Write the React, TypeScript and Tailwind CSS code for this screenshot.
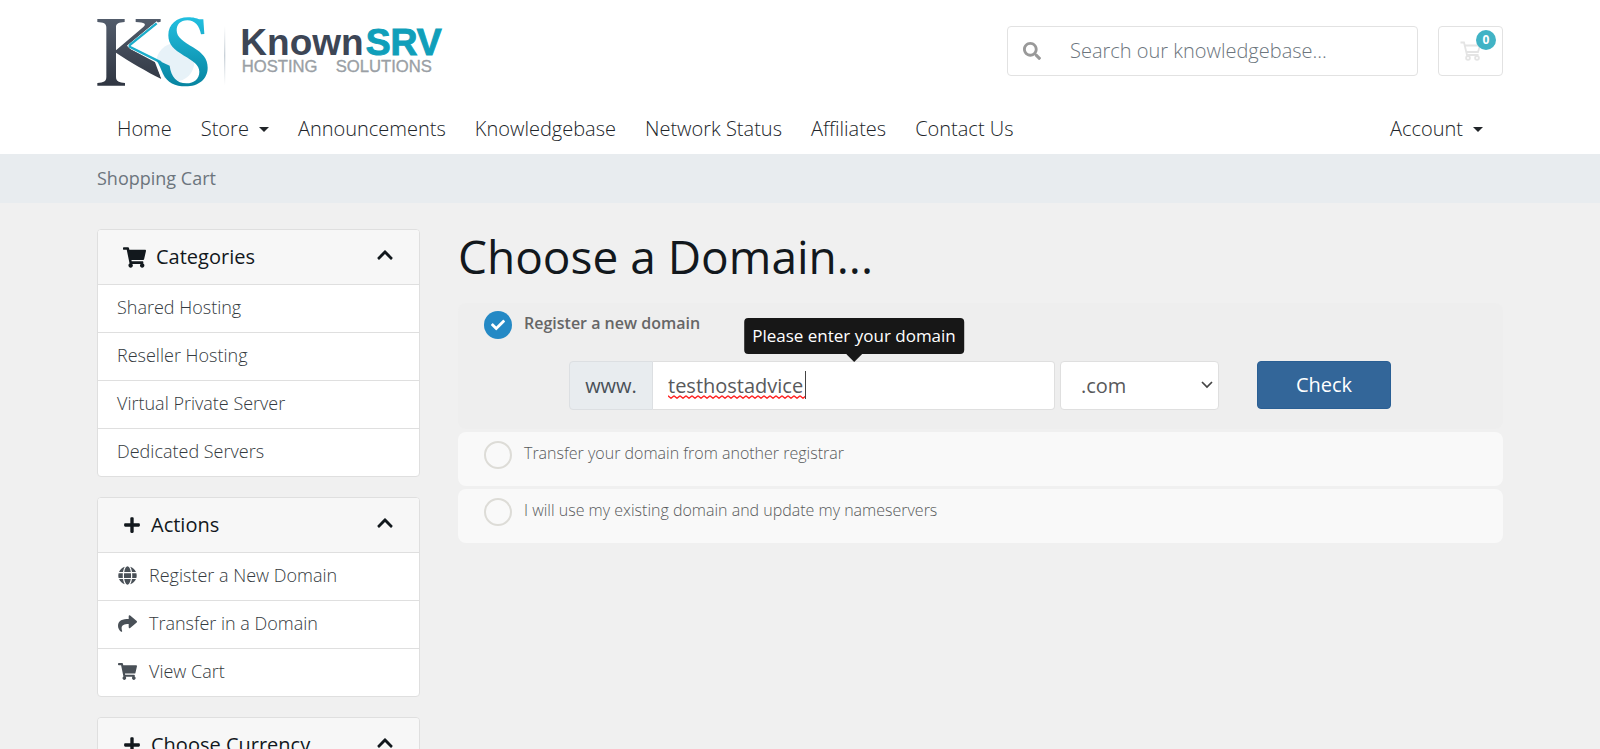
import React from 'react';
import { FaCheck, FaChevronUp, FaGlobe, FaPlus, FaSearch, FaShare, FaShoppingCart } from 'react-icons/fa';

const navItems = [
  { label: 'Home' },
  { label: 'Store', dropdown: true },
  { label: 'Announcements' },
  { label: 'Knowledgebase' },
  { label: 'Network Status' },
  { label: 'Affiliates' },
  { label: 'Contact Us' },
];

const categories = ['Shared Hosting', 'Reseller Hosting', 'Virtual Private Server', 'Dedicated Servers'];

const actions = [
  { label: 'Register a New Domain', icon: FaGlobe },
  { label: 'Transfer in a Domain', icon: FaShare },
  { label: 'View Cart', icon: FaShoppingCart },
];

const Caret = () => (
  <svg viewBox="0 0 10 5" className="ml-2.5 h-[5px] w-2.5 fill-current" aria-hidden="true">
    <path d="M0 0h10L5 5z" />
  </svg>
);

const Logo = () => (
  <svg viewBox="50 42 1041 219" className="h-[73px] w-[347px]" role="img" aria-label="KnownSRV Hosting Solutions">
    <defs>
      <linearGradient id="dark" x1="0" y1="0" x2="0" y2="1">
        <stop offset="0" stopColor="#525c6b" />
        <stop offset="1" stopColor="#303642" />
      </linearGradient>
      <linearGradient id="teal" x1="0" y1="0" x2="0" y2="1">
        <stop offset="0" stopColor="#22bfe0" />
        <stop offset="1" stopColor="#0784a0" />
      </linearGradient>
      <linearGradient id="rule" x1="0" y1="0" x2="0" y2="1">
        <stop offset="0" stopColor="#fff" />
        <stop offset="0.5" stopColor="#c9d1d8" />
        <stop offset="1" stopColor="#fff" />
      </linearGradient>
    </defs>
    <circle cx="285" cy="184" r="57" fill="#e7f2f8" />
    <path
      fill="url(#dark)"
      d="M51 54H133V63C116 64 107 67 107 78V148L189 78C199 69 194 64 166 63V54H241V62C229 64 221 68 211 76L140 134L149 143L229 186L243 234C200 213 145 180 107 155V228C107 241 117 245 134 246V254H51V246C70 245 78 241 78 228V80C78 67 69 64 51 63Z"
    />
    <path fill="none" stroke="#fff" strokeWidth="9" d="M232 64L148 134L155 141L226 176L236 203L250 238" />
    <path fill="none" stroke="#1badca" strokeWidth="7" d="M229 67L150 131Q145 135 151 139L242 184" />
    <path
      fill="url(#teal)"
      d="M369 55L372 99L362 100C357 74 344 58 321 58C300 58 289 71 289 88C289 110 310 122 338 139C367 156 382 174 382 200C382 235 354 256 316 256C284 256 261 245 248 218C242 206 238 191 226 175L268 194C272 227 290 247 318 247C342 247 357 233 357 212C357 191 337 179 311 164C281 146 264 131 264 103C264 70 289 49 323 49C340 49 349 52 357 55Z"
    />
    <rect x="431" y="75" width="4" height="178" fill="url(#rule)" />
    <g fontFamily="'Liberation Sans', Arial, sans-serif">
      <text x="480" y="162" fontSize="111" fontWeight="700" fill="#3d4656">Known</text>
      <text x="856" y="162" fontSize="112" fontWeight="700" fill="#109fba" stroke="#109fba" strokeWidth="3">SRV</text>
      <text x="484" y="212" fontSize="50" fill="#9a9fa5" stroke="#9a9fa5">HOSTING</text>
      <text x="766" y="212" fontSize="50" fill="#9a9fa5" stroke="#9a9fa5">SOLUTIONS</text>
    </g>
  </svg>
);

const SidebarCard = ({ title, icon, children }: { title: string; icon: React.ReactNode; children?: React.ReactNode }) => (
  <section className="overflow-hidden rounded border border-[#dfdfdf] bg-white">
    <h3 className="flex h-[55px] items-center border-b border-[#dfdfdf] bg-[#f7f7f7] px-[25px] text-xl font-normal text-[#12181d]">
      {icon}
      <span className="flex-1">{title}</span>
      <button type="button" aria-label={`Collapse ${title}`} className="pb-1">
        <FaChevronUp className="size-[18px]" />
      </button>
    </h3>
    {children}
  </section>
);

const App = () => {
  return (
    <div className="min-h-screen bg-[#f0f0f0] font-['Open_Sans',sans-serif] font-light text-[#212529]">
      <header className="bg-white">
        <div className="mx-auto max-w-[1406px]">
          <div className="flex h-[102px] items-center justify-between">
            <a href="#">
              <Logo />
            </a>
            <div className="flex items-center gap-5">
              <form className="flex h-[50px] w-[411px] items-center rounded border border-[#e2e2e2]">
                <button type="button" aria-label="Search" className="px-[15px] text-[#999]">
                  <FaSearch className="size-[18px]" />
                </button>
                <input
                  type="text"
                  aria-label="Search our knowledgebase"
                  placeholder="Search our knowledgebase..."
                  className="min-w-0 flex-1 px-3.5 text-xl outline-none placeholder:text-[#6c757d]"
                />
              </form>
              <a
                href="#"
                aria-label="Shopping Cart"
                className="relative flex h-[50px] w-[65px] items-center justify-center rounded border border-[#e2e2e2] text-[#e4e4e4]"
              >
                <svg viewBox="0 0 22 20" className="h-5 w-[22px]" fill="none" stroke="currentColor" strokeWidth="1.8">
                  <path d="M0.5 1.5H4L7 14H18.5M4.8 4.5H20L18 11H6.4" />
                  <circle cx="8" cy="17" r="1.9" />
                  <circle cx="17" cy="17" r="1.9" />
                </svg>
                <span className="absolute top-[3px] right-1.5 flex size-5 items-center justify-center rounded-full bg-[#41b3c5] text-xs font-bold text-white">
                  0
                </span>
              </a>
            </div>
          </div>
          <nav className="flex h-[52px] items-start justify-between px-5 pt-3 text-xl leading-[30px]">
            <ul className="flex gap-[29px]">
              {navItems.map((item) => (
                <li key={item.label}>
                  <a href="#" className="flex items-center">
                    {item.label}
                    {item.dropdown && <Caret />}
                  </a>
                </li>
              ))}
            </ul>
            <a href="#" className="flex items-center">
              Account
              <Caret />
            </a>
          </nav>
        </div>
      </header>

      <div className="bg-[#e8ecef]">
        <div className="mx-auto flex h-[49px] max-w-[1406px] items-center pb-0.5 text-lg font-normal text-[#6c757d]">
          Shopping Cart
        </div>
      </div>

      <div className="mx-auto flex max-w-[1406px] items-start gap-[38px] pt-[26px]">
        <aside className="flex w-[323px] shrink-0 flex-col gap-5">
          <SidebarCard title="Categories" icon={<FaShoppingCart className="mr-2.5 size-[23px]" />}>
            <ul className="divide-y divide-[#dfdfdf] text-lg text-[#343a40]">
              {categories.map((label) => (
                <li key={label}>
                  <a href="#" className="flex h-[47px] items-center px-[19px] pb-[3px]">{label}</a>
                </li>
              ))}
            </ul>
          </SidebarCard>
          <SidebarCard title="Actions" icon={<FaPlus className="mr-2.5 size-[18px]" />}>
            <ul className="divide-y divide-[#dfdfdf] text-lg text-[#343a40]">
              {actions.map(({ label, icon: Icon }) => (
                <li key={label}>
                  <a href="#" className="flex h-[47px] items-center gap-3 px-5 pb-[3px]">
                    <Icon className="size-[19px] text-[#495057]" />
                    {label}
                  </a>
                </li>
              ))}
            </ul>
          </SidebarCard>
          <SidebarCard title="Choose Currency" icon={<FaPlus className="mr-2.5 size-[18px]" />} />
        </aside>

        <main className="min-w-0 flex-1">
          <h1 className="mb-5 text-[46px] leading-[54px] font-normal text-[#12181d]">Choose a Domain...</h1>
          <form className="flex flex-col gap-[3px] text-[#58595b]">
            <div className="h-[126px] rounded-lg bg-[#eee] px-[26px] pt-2">
              <label className="flex items-start gap-3 text-base leading-6 font-semibold text-[#666]">
                <span className="relative size-7">
                  <input type="radio" name="domain" defaultChecked className="block size-7 appearance-none rounded-full bg-[#2489c5]" />
                  <FaCheck className="absolute top-[7px] left-[7px] size-3.5 text-white" />
                </span>
                Register a new domain
              </label>
              <div className="mt-[22px] ml-[85px] flex text-xl">
                <label
                  htmlFor="sld"
                  className="flex w-[84px] items-center justify-center rounded-l border border-[#dcdfe2] bg-[#e8ecef] font-normal text-[#495057]"
                >
                  www.
                </label>
                <div className="relative h-[49px] w-[402px]">
                  <input
                    id="sld"
                    type="text"
                    defaultValue="testhostadvice"
                    spellCheck={false}
                    className="size-full rounded-r border border-l-0 border-[#dfdfdf] bg-white px-[15px] font-normal outline-none"
                  />
                  <svg className="absolute top-[34px] left-[15px] h-1 w-[137px]" aria-hidden="true">
                    <defs>
                      <pattern id="wave" width="6" height="4" patternUnits="userSpaceOnUse">
                        <path d="M0 0.8L3 3.2L6 0.8" fill="none" stroke="#f22" strokeWidth="1.4" />
                      </pattern>
                    </defs>
                    <rect width="137" height="4" fill="url(#wave)" />
                  </svg>
                  <span className="absolute top-2.5 left-[152px] h-7 w-px bg-[#444]" />
                  <div
                    role="tooltip"
                    className="absolute bottom-[56px] left-1/2 flex h-9 -translate-x-1/2 items-center rounded bg-[#171717] px-2 text-[17px] font-normal whitespace-nowrap text-white"
                  >
                    Please enter your domain
                    <svg viewBox="0 0 16 8" className="absolute top-full left-1/2 h-2 w-4 -translate-x-1/2 fill-[#171717]">
                      <path d="M0 0h16L8 8z" />
                    </svg>
                  </div>
                </div>
                <div className="relative ml-[5px] h-[49px] w-[159px]">
                  <select
                    aria-label="Domain extension"
                    className="size-full appearance-none rounded border border-[#dfdfdf] bg-white px-5 font-normal"
                  >
                    <option>.com</option>
                  </select>
                  <svg viewBox="0 0 12 8" className="pointer-events-none absolute top-5 right-1.5 h-2 w-3" fill="none" stroke="#444" strokeWidth="1.7">
                    <path d="M1 1L6 6L11 1" />
                  </svg>
                </div>
                <button type="button" className="ml-[38px] h-12 w-[134px] rounded border border-[#2a5f94] bg-[#336699] font-normal text-white">
                  Check
                </button>
              </div>
            </div>
            <label className="flex h-[54px] items-start gap-3 rounded-lg bg-[#f9f9f9] px-[26px] pt-[9px] text-base leading-6">
              <input type="radio" name="domain" className="size-7 appearance-none rounded-full border-2 border-[#dddcd7]" />
              Transfer your domain from another registrar
            </label>
            <label className="flex h-[54px] items-start gap-3 rounded-lg bg-[#f9f9f9] px-[26px] pt-[9px] text-base leading-6">
              <input type="radio" name="domain" className="size-7 appearance-none rounded-full border-2 border-[#dddcd7]" />
              I will use my existing domain and update my nameservers
            </label>
          </form>
        </main>
      </div>
    </div>
  );
};

export default App;
